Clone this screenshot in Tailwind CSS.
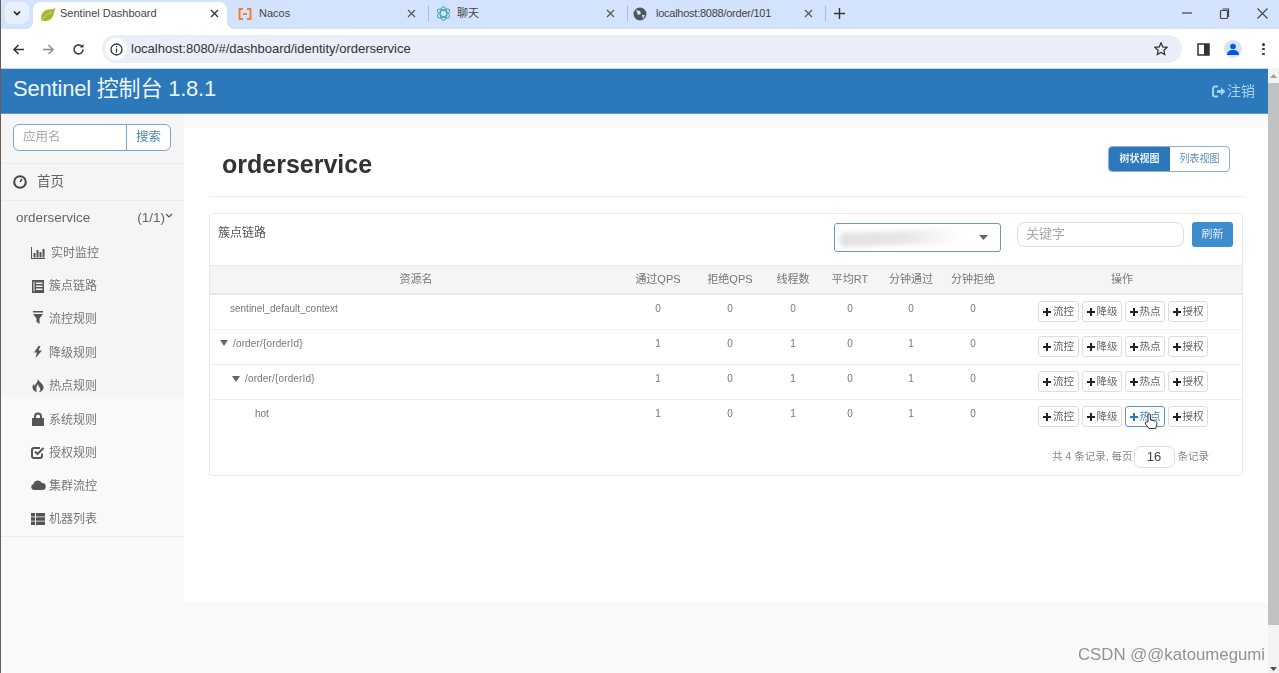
<!DOCTYPE html>
<html lang="en">
<head>
  <meta charset="UTF-8" />
  <title>Sentinel Dashboard</title>
  <script src="https://cdn.jsdelivr.net/npm/@tailwindcss/browser@4"></script>
</head>
<body class="h-[673px] w-[1279px] overflow-hidden bg-[#f9f9f9] font-['Liberation_Sans','Noto_Sans_CJK_SC',sans-serif] text-[#777]">
<div class="relative h-[673px] blur-[0.4px]">

  <!-- Tab strip -->
  <div class="flex h-[29px] items-end bg-[#d3e3fd] pl-[5px] text-[11px] text-[#444]">
    <div class="mb-[5px] flex h-[22px] w-[24px] items-center justify-center rounded-md bg-[#e8f0fe]">
      <svg class="h-[10px] w-[10px]" viewBox="0 0 10 10" fill="none" stroke="#222" stroke-width="1.6"><path d="M2 3.500l3 3 3-3"/></svg>
    </div>
    <div class="relative ml-[4px] flex h-[27px] w-[194px] items-center rounded-t-lg bg-white pb-[4px] pl-[7px]">
      <span class="absolute bottom-0 left-[-8px] h-[8px] w-[8px] bg-[radial-gradient(circle_at_0_0,#d3e3fd_8px,#fff_8.5px)]"></span>
      <span class="absolute bottom-0 right-[-8px] h-[8px] w-[8px] bg-[radial-gradient(circle_at_100%_0,#d3e3fd_8px,#fff_8.5px)]"></span>
      <svg class="h-[16px] w-[16px]" viewBox="0 0 16 16"><path d="M15.500 1C14 4.500 11 2.500 6.500 4 2 5.500.5 10 1.500 14.500c3 1 10.500 1 12-6 .6-3 2-5 2-7.500z" fill="#a5b832"/><path d="M2.500 14C5 9.500 8 7.500 12 6" fill="none" stroke="#d8dc7a" stroke-width=".8"/></svg>
      <span class="ml-[4px] w-[150px]">Sentinel Dashboard</span>
      <svg class="h-[9px] w-[9px]" viewBox="0 0 9 9" stroke="#333" stroke-width="1.4"><path d="M1 1l7 7M8 1L1 8"/></svg>
    </div>
    <div class="flex h-[27px] w-[201px] items-center pb-[4px] pl-[11px]">
      <svg class="h-[14px] w-[14px]" viewBox="0 0 14 14" fill="none" stroke="#ee7f33" stroke-width="2"><path d="M5 2H1.500v10H5M9 2h3.500v10H9M5 7h4"/></svg>
      <span class="ml-[7px] w-[148px]">Nacos</span>
      <svg class="h-[9px] w-[9px]" viewBox="0 0 9 9" stroke="#555" stroke-width="1.2"><path d="M1 1l7 7M8 1L1 8"/></svg>
    </div>
    <div class="mb-[8px] h-[16px] w-px bg-[#a8c0e0]"></div>
    <div class="flex h-[27px] w-[198px] items-center pb-[4px] pl-[7px]">
      <svg class="h-[15px] w-[15px]" viewBox="0 0 15 15" fill="none" stroke="#47a6b3" stroke-width="1.100"><ellipse cx="7.500" cy="7.500" rx="3.200" ry="6.800"/><ellipse cx="7.500" cy="7.500" rx="3.200" ry="6.800" transform="rotate(60 7.500 7.500)"/><ellipse cx="7.500" cy="7.500" rx="3.200" ry="6.800" transform="rotate(120 7.500 7.500)"/></svg>
      <span class="ml-[6px] w-[149px]">聊天</span>
      <svg class="h-[9px] w-[9px]" viewBox="0 0 9 9" stroke="#555" stroke-width="1.2"><path d="M1 1l7 7M8 1L1 8"/></svg>
    </div>
    <div class="mb-[8px] h-[16px] w-px bg-[#a8c0e0]"></div>
    <div class="flex h-[27px] w-[197px] items-center pb-[4px] pl-[5px]">
      <svg class="h-[14px] w-[14px]" viewBox="0 0 14 14"><circle cx="7" cy="7" r="6.500" fill="#50565e"/><path d="M3 3l4 1 1 3-3 1zM9 8l3 0-2 4z" fill="#d3e3fd"/></svg>
      <span class="ml-[9px] w-[148px] tracking-[-0.25px]">localhost:8088/order/101</span>
      <svg class="h-[9px] w-[9px]" viewBox="0 0 9 9" stroke="#555" stroke-width="1.2"><path d="M1 1l7 7M8 1L1 8"/></svg>
    </div>
    <div class="mb-[8px] h-[16px] w-px bg-[#a8c0e0]"></div>
    <div class="mb-[8px] ml-[8px] flex h-[16px] items-center">
      <svg class="h-[11px] w-[11px]" viewBox="0 0 11 11" stroke="#333" stroke-width="1.4"><path d="M5.500 0v11M0 5.500h11"/></svg>
    </div>
    <div class="mb-[8px] ml-auto flex h-[16px] w-[97px] items-center justify-between pr-[11px]">
      <svg class="h-[10px] w-[10px]" viewBox="0 0 10 10" stroke="#444" stroke-width="1.2"><path d="M0 5h10"/></svg>
      <svg class="h-[11px] w-[11px]" viewBox="0 0 11 11" fill="none" stroke="#444" stroke-width="1.2"><rect x="1.500" y="2.500" width="7" height="8" rx="1"/><path d="M3.500 1h6v8"/></svg>
      <svg class="h-[11px] w-[11px]" viewBox="0 0 11 11" stroke="#444" stroke-width="1.100"><path d="M.5.5l10 10M10.500.5l-10 10"/></svg>
    </div>
  </div>

  <!-- Toolbar -->
  <div class="flex h-[39px] items-center bg-white pt-[1px]">
    <div class="flex w-[102px] items-center pl-[12px]">
      <svg class="h-[13px] w-[13px]" viewBox="0 0 13 13" fill="none" stroke="#333" stroke-width="1.500"><path d="M12 6.500H2M6.500 2L2 6.500 6.500 11"/></svg>
      <svg class="ml-[17px] h-[13px] w-[13px]" viewBox="0 0 13 13" fill="none" stroke="#888" stroke-width="1.300"><path d="M1 6.500h10M6.500 2L11 6.500 6.500 11"/></svg>
      <svg class="ml-[17px] h-[13px] w-[13px]" viewBox="0 0 13 13" fill="none" stroke="#333" stroke-width="1.500"><path d="M11 6.500a4.500 4.500 0 1 1-1.500-3.400"/><path d="M11.500 1v3.500H8" fill="#333" stroke="none"/></svg>
    </div>
    <div class="flex h-[28px] w-[1080px] items-center rounded-full bg-[#e9eef8] text-[13px] text-[#333]">
      <div class="ml-[3px] flex h-[22px] w-[22px] items-center justify-center rounded-full bg-white">
        <svg class="h-[13px] w-[13px]" viewBox="0 0 13 13" fill="none" stroke="#333" stroke-width="1.300"><circle cx="6.500" cy="6.500" r="5.500"/><path d="M6.500 5.500v4M6.500 3v1.300"/></svg>
      </div>
      <span class="ml-[4px]">localhost:8080/#/dashboard/identity/orderservice</span>
      <svg class="ml-auto mr-[14px] h-[14px] w-[14px]" viewBox="0 0 14 14" fill="none" stroke="#333" stroke-width="1.300"><path d="M7 1l1.800 3.900 4.200.5-3.100 2.900.8 4.200L7 10.400l-3.700 2.100.8-4.200L1 5.400l4.200-.5z"/></svg>
    </div>
    <svg class="ml-[15px] h-[13px] w-[13px]" viewBox="0 0 13 13"><path d="M1 1h11v11H1z" fill="none" stroke="#333" stroke-width="1.500"/><path d="M7 1h5v11H7z" fill="#333"/></svg>
    <div class="ml-[14px] flex h-[18px] w-[18px] items-center justify-center rounded-full bg-[#d3e3fd]">
      <svg class="h-[12px] w-[12px]" viewBox="0 0 12 12" fill="#0b57d0"><circle cx="6" cy="3.500" r="2.800"/><path d="M0 12c0-3 2-5 6-5s6 2 6 5z"/></svg>
    </div>
    <div class="ml-[20px] flex h-[12px] w-[3px] flex-col justify-between">
      <div class="h-[2.500px] w-[2.500px] rounded-full bg-[#333]"></div>
      <div class="h-[2.500px] w-[2.500px] rounded-full bg-[#333]"></div>
      <div class="h-[2.500px] w-[2.500px] rounded-full bg-[#333]"></div>
    </div>
  </div>

  <!-- Page viewport with its scrollbar -->
  <div class="relative flex h-[605px]">
    <div class="w-[1268px] border-t border-[#c9d3de]">

      <!-- App header -->
      <header class="flex h-[45px] items-center justify-between border-b border-[#5c9bd1] bg-[#2b78bb] pl-[13px] pr-[13px] text-white">
        <span class="-mt-[4px] text-[22px] leading-none tracking-[-0.2px] text-[#eef4fa]">Sentinel 控制台 1.8.1</span>
        <span class="flex items-center gap-[1px] text-[14px] text-[#a8d4ec]">
          <svg class="h-[13px] w-[14px]" viewBox="0 0 14 13" fill="none" stroke="#a8d4ec" stroke-width="2"><path d="M6 1.500H3a2 2 0 0 0-2 2v6a2 2 0 0 0 2 2h3"/><path d="M5 6.500h5" stroke-width="3"/><path d="M9 2.500l4.500 4-4.500 4z" fill="#a8d4ec" stroke="none"/></svg>
          注销
        </span>
      </header>

      <div class="flex">
        <!-- Sidebar -->
        <aside class="h-[559px] w-[184px] bg-[linear-gradient(#f5f5f5_282px,#f9f9f9_282px)] text-[12px] text-[#777]">
          <div class="border-b border-[#ececec]">
            <div class="h-[50px] border-b border-[#ececec] pl-[13px] pt-[10px]">
              <div class="flex h-[27px] w-[158px] overflow-hidden rounded-[6px] border border-[#7fa5c9] bg-white text-[12.5px]">
                <span class="flex-1 pl-[9px] leading-[24px] text-[#aaa]">应用名</span>
                <span class="w-[44px] border-l border-[#7fa5c9] text-center leading-[25px] text-[#4a86b8]">搜索</span>
              </div>
            </div>
            <div class="flex h-[37px] items-center border-b border-[#ececec] pl-[13px] text-[13.5px] text-[#666]">
              <svg class="h-[14px] w-[14px]" viewBox="0 0 14 14" fill="none" stroke="#444" stroke-width="2"><circle cx="7" cy="7" r="5.800"/><path d="M7 7l2-3M4 6h.1M7 4h.1" stroke-width="1.500"/></svg>
              <span class="ml-[10px]">首页</span>
            </div>
            <div class="flex h-[34px] items-center pl-[16px] pr-[11px] text-[13.5px] text-[#666]">
              <span>orderservice</span>
              <span class="ml-auto">(1/1)</span>
              <svg class="mb-[4px] h-[6px] w-[8px]" viewBox="0 0 8 6" fill="none" stroke="#555" stroke-width="1.200"><path d="M1 1l3 3 3-3"/></svg>
            </div>
            <ul class="mt-[1px]">
              <li class="flex h-[33.4px] items-center pl-[31px]">
                <svg class="h-[12px] w-[14px]" viewBox="0 0 14 12" fill="#555"><path d="M0 0h1v11h13v1H0zM2.500 6h2v4.500h-2zM5.500 3h2v7.500h-2zM8.500 5h2v5.500h-2zM11.500 2h2v8.500h-2z"/></svg>
                <span class="ml-[6px]">实时监控</span>
              </li>
              <li class="flex h-[33.4px] items-center pl-[32px]">
                <svg class="h-[13px] w-[12px]" viewBox="0 0 12 13" fill="#555"><path d="M0 0h12v13H0zM1.500 1.500v10h1v-10zM4 2.500v1.500h6.500V2.500zM4 5.500V7h6.500V5.500zM4 8.500V10h6.500V8.500z" fill-rule="evenodd"/></svg>
                <span class="ml-[5px]">簇点链路</span>
              </li>
              <li class="flex h-[33.4px] items-center pl-[33px]">
                <svg class="mb-[3px] h-[13px] w-[10px]" viewBox="0 0 10 13" fill="#555"><path d="M0 0h10v1.500H0zM0 3h10L6.500 7.500V13l-3-2V7.500z"/></svg>
                <span class="ml-[6px]">流控规则</span>
              </li>
              <li class="flex h-[33.4px] items-center pl-[34px]">
                <svg class="mb-[2px] h-[12px] w-[8px]" viewBox="0 0 8 12" fill="#555"><path d="M4.500 0L0 6.500h3L1.500 12 8 4.500H4.500L6.500 0z"/></svg>
                <span class="ml-[7px]">降级规则</span>
              </li>
              <li class="flex h-[33.4px] items-center pl-[32px]">
                <svg class="mb-[2px] h-[13px] w-[12px]" viewBox="0 0 12 13" fill="#555"><path d="M6 0c1 3 5 4.500 5.500 8 .3 3-2.500 5-4.500 5 1.500-1 2-3 .3-5C6.500 7 6 6 6.500 5 5 6 3.500 8.500 5 13 2 12.500.3 10.500.5 8c.1-1.500 1-2.500 1.500-3 0 1 .5 1.500 1 1.500C3.500 4.500 6 3 6 0z"/></svg>
                <span class="ml-[5px]">热点规则</span>
              </li>
              <li class="flex h-[33.4px] items-center pl-[31px]">
                <svg class="mb-[1px] h-[14px] w-[14px]" viewBox="0 0 14 14" fill="#555"><path d="M3 6V4.500a4 4 0 0 1 8 0V6h2v8H1V6zM5 6h4V4.500a2 2 0 0 0-4 0z" fill-rule="evenodd"/></svg>
                <span class="ml-[4px]">系统规则</span>
              </li>
              <li class="flex h-[33.4px] items-center pl-[31px]">
                <svg class="mb-[1px] h-[13px] w-[14px]" viewBox="0 0 14 13" fill="none" stroke="#555" stroke-width="2"><path d="M11 7.500V10a2 2 0 0 1-2 2H3a2 2 0 0 1-2-2V4a2 2 0 0 1 2-2h6"/><path d="M4 5.500l2.500 2.500L12.500 2"/></svg>
                <span class="ml-[4px]">授权规则</span>
              </li>
              <li class="flex h-[33.4px] items-center pl-[31px]">
                <svg class="mb-[3px] h-[10px] w-[15px]" viewBox="0 0 15 10" fill="#555"><path d="M3 10a3 3 0 0 1-.5-5.900A4.500 4.500 0 0 1 11 3a3.500 3.500 0 0 1 .5 7z"/></svg>
                <span class="ml-[3px]">集群流控</span>
              </li>
              <li class="flex h-[32.4px] items-center pl-[31px]">
                <svg class="mb-[1px] h-[12px] w-[14px]" viewBox="0 0 14 12" fill="#555"><path d="M0 0h4v3.500H0zM5 0h9v3.500H5zM0 4.300h4v3.500H0zM5 4.300h9v3.500H5zM0 8.500h4V12H0zM5 8.500h9V12H5z"/></svg>
                <span class="ml-[4px]">机器列表</span>
              </li>
            </ul>
          </div>
        </aside>

        <!-- Main -->
        <main class="flex-1 pt-[14px]">
          <div class="h-[474px] bg-white pl-[25px] pr-[24px]">
            <div class="flex h-[69px] items-start justify-between border-b border-[#eeeeee]">
              <h1 class="ml-[13px] mt-[21px] text-[25px] font-bold leading-[30px] text-[#333]">orderservice</h1>
              <div class="mr-[14px] mt-[18px] flex h-[26px] overflow-hidden rounded-[4px] border border-[#8fb2d0] text-[10px] leading-[24px]">
                <span class="w-[61px] bg-[#2b78bb] text-center font-bold text-[#e8f0f8]">树状视图</span>
                <span class="w-[59px] text-center text-[#5a8fbc]">列表视图</span>
              </div>
            </div>

            <div class="mt-[16px] h-[263px] w-[1034px] rounded-[4px] border border-[#e7e7e7] text-[10px]">
              <div class="flex h-[51px] items-start">
                <span class="ml-[8px] mt-[10px] shrink-0 whitespace-nowrap text-[12px] text-[#555]">簇点链路</span>
                <div class="ml-auto mt-[9px] flex h-[29px] w-[167px] items-center rounded-[3px] border border-[#6e97bd]">
                  <div class="ml-[5px] h-[14px] w-[122px] -rotate-[2deg] rounded-sm bg-linear-to-r from-[#e2e2e2] via-[#e6e6e6] to-white blur-[2px]"></div>
                  <svg class="ml-auto mr-[12px] h-[5px] w-[9px]" viewBox="0 0 9 5" fill="#666"><path d="M0 0h9L4.500 5z"/></svg>
                </div>
                <div class="ml-[16px] mt-[8px] h-[25px] w-[167px] rounded-[8px] border border-[#dddddd] pl-[8px] text-[13px] leading-[22px] text-[#aaa]">关键字</div>
                <div class="ml-[8px] mr-[9px] mt-[8px] h-[25px] w-[41px] rounded-[3px] bg-[#3f8dcf] text-center text-[11px] leading-[25px] text-[#dcebf7]">刷新</div>
              </div>

              <div class="grid h-[30px] grid-cols-[410px_76px_68px_58px_56px_66px_58px_1fr] items-center border-t border-b-2 border-[#e8e8e8] bg-[#f4f5f7] text-center text-[11px] text-[#777]">
                <span class="pl-[2px]">资源名</span><span>通过QPS</span><span>拒绝QPS</span><span>线程数</span><span>平均RT</span><span>分钟通过</span><span>分钟拒绝</span><span>操作</span>
              </div>

              <!-- row -->
              <div class="grid h-[35px] grid-cols-[410px_76px_68px_58px_56px_66px_58px_1fr] border-b border-[#eeeeee] text-center">
                <span class="pl-[20px] pt-[6px] text-left">sentinel_default_context</span>
                <span class="pt-[6px]">0</span><span class="pt-[6px]">0</span><span class="pt-[6px]">0</span><span class="pt-[6px]">0</span><span class="pt-[6px]">0</span><span class="pt-[6px]">0</span>
                <div class="flex gap-[3px] pl-[36px] pt-[6px] text-[10.5px]">
                  <span class="flex h-[21px] w-[41px] items-center justify-center gap-[2px] rounded-[3px] border border-[#dddddd] text-[#666]"><svg class="h-[8px] w-[8px]" viewBox="0 0 8 8" fill="#222"><path d="M3 0h2v3h3v2H5v3H3V5H0V3h3z"/></svg>流控</span>
                  <span class="flex h-[21px] w-[40px] items-center justify-center gap-[2px] rounded-[3px] border border-[#dddddd] text-[#666]"><svg class="h-[8px] w-[8px]" viewBox="0 0 8 8" fill="#222"><path d="M3 0h2v3h3v2H5v3H3V5H0V3h3z"/></svg>降级</span>
                  <span class="flex h-[21px] w-[40px] items-center justify-center gap-[2px] rounded-[3px] border border-[#dddddd] text-[#666]"><svg class="h-[8px] w-[8px]" viewBox="0 0 8 8" fill="#222"><path d="M3 0h2v3h3v2H5v3H3V5H0V3h3z"/></svg>热点</span>
                  <span class="flex h-[21px] w-[40px] items-center justify-center gap-[2px] rounded-[3px] border border-[#dddddd] text-[#666]"><svg class="h-[8px] w-[8px]" viewBox="0 0 8 8" fill="#222"><path d="M3 0h2v3h3v2H5v3H3V5H0V3h3z"/></svg>授权</span>
                </div>
              </div>

              <div class="grid h-[35px] grid-cols-[410px_76px_68px_58px_56px_66px_58px_1fr] border-b border-[#eeeeee] text-center">
                <span class="flex items-start pl-[10px] pt-[6px] text-left tracking-[0.15px]"><svg class="mr-[5px] mt-[4px] h-[6px] w-[8px]" viewBox="0 0 8 6" fill="#666"><path d="M0 0h8L4 6z"/></svg>/order/{orderId}</span>
                <span class="pt-[6px]">1</span><span class="pt-[6px]">0</span><span class="pt-[6px]">1</span><span class="pt-[6px]">0</span><span class="pt-[6px]">1</span><span class="pt-[6px]">0</span>
                <div class="flex gap-[3px] pl-[36px] pt-[6px] text-[10.5px]">
                  <span class="flex h-[21px] w-[41px] items-center justify-center gap-[2px] rounded-[3px] border border-[#dddddd] text-[#666]"><svg class="h-[8px] w-[8px]" viewBox="0 0 8 8" fill="#222"><path d="M3 0h2v3h3v2H5v3H3V5H0V3h3z"/></svg>流控</span>
                  <span class="flex h-[21px] w-[40px] items-center justify-center gap-[2px] rounded-[3px] border border-[#dddddd] text-[#666]"><svg class="h-[8px] w-[8px]" viewBox="0 0 8 8" fill="#222"><path d="M3 0h2v3h3v2H5v3H3V5H0V3h3z"/></svg>降级</span>
                  <span class="flex h-[21px] w-[40px] items-center justify-center gap-[2px] rounded-[3px] border border-[#dddddd] text-[#666]"><svg class="h-[8px] w-[8px]" viewBox="0 0 8 8" fill="#222"><path d="M3 0h2v3h3v2H5v3H3V5H0V3h3z"/></svg>热点</span>
                  <span class="flex h-[21px] w-[40px] items-center justify-center gap-[2px] rounded-[3px] border border-[#dddddd] text-[#666]"><svg class="h-[8px] w-[8px]" viewBox="0 0 8 8" fill="#222"><path d="M3 0h2v3h3v2H5v3H3V5H0V3h3z"/></svg>授权</span>
                </div>
              </div>

              <div class="grid h-[35px] grid-cols-[410px_76px_68px_58px_56px_66px_58px_1fr] border-b border-[#eeeeee] text-center">
                <span class="flex items-start pl-[22px] pt-[6px] text-left tracking-[0.15px]"><svg class="mr-[5px] mt-[5px] h-[6px] w-[8px]" viewBox="0 0 8 6" fill="#666"><path d="M0 0h8L4 6z"/></svg>/order/{orderId}</span>
                <span class="pt-[6px]">1</span><span class="pt-[6px]">0</span><span class="pt-[6px]">1</span><span class="pt-[6px]">0</span><span class="pt-[6px]">1</span><span class="pt-[6px]">0</span>
                <div class="flex gap-[3px] pl-[36px] pt-[6px] text-[10.5px]">
                  <span class="flex h-[21px] w-[41px] items-center justify-center gap-[2px] rounded-[3px] border border-[#dddddd] text-[#666]"><svg class="h-[8px] w-[8px]" viewBox="0 0 8 8" fill="#222"><path d="M3 0h2v3h3v2H5v3H3V5H0V3h3z"/></svg>流控</span>
                  <span class="flex h-[21px] w-[40px] items-center justify-center gap-[2px] rounded-[3px] border border-[#dddddd] text-[#666]"><svg class="h-[8px] w-[8px]" viewBox="0 0 8 8" fill="#222"><path d="M3 0h2v3h3v2H5v3H3V5H0V3h3z"/></svg>降级</span>
                  <span class="flex h-[21px] w-[40px] items-center justify-center gap-[2px] rounded-[3px] border border-[#dddddd] text-[#666]"><svg class="h-[8px] w-[8px]" viewBox="0 0 8 8" fill="#222"><path d="M3 0h2v3h3v2H5v3H3V5H0V3h3z"/></svg>热点</span>
                  <span class="flex h-[21px] w-[40px] items-center justify-center gap-[2px] rounded-[3px] border border-[#dddddd] text-[#666]"><svg class="h-[8px] w-[8px]" viewBox="0 0 8 8" fill="#222"><path d="M3 0h2v3h3v2H5v3H3V5H0V3h3z"/></svg>授权</span>
                </div>
              </div>

              <div class="grid h-[35px] grid-cols-[410px_76px_68px_58px_56px_66px_58px_1fr] text-center">
                <span class="pl-[45px] pt-[6px] text-left">hot</span>
                <span class="pt-[6px]">1</span><span class="pt-[6px]">0</span><span class="pt-[6px]">1</span><span class="pt-[6px]">0</span><span class="pt-[6px]">1</span><span class="pt-[6px]">0</span>
                <div class="flex gap-[3px] pl-[36px] pt-[6px] text-[10.5px]">
                  <span class="flex h-[21px] w-[41px] items-center justify-center gap-[2px] rounded-[3px] border border-[#dddddd] text-[#666]"><svg class="h-[8px] w-[8px]" viewBox="0 0 8 8" fill="#222"><path d="M3 0h2v3h3v2H5v3H3V5H0V3h3z"/></svg>流控</span>
                  <span class="flex h-[21px] w-[40px] items-center justify-center gap-[2px] rounded-[3px] border border-[#dddddd] text-[#666]"><svg class="h-[8px] w-[8px]" viewBox="0 0 8 8" fill="#222"><path d="M3 0h2v3h3v2H5v3H3V5H0V3h3z"/></svg>降级</span>
                  <span class="relative flex h-[21px] w-[40px] items-center justify-center gap-[2px] rounded-[3px] border border-[#5f93c2] text-[#4a86b8]"><svg class="h-[8px] w-[8px]" viewBox="0 0 8 8" fill="#2b78bb"><path d="M3 0h2v3h3v2H5v3H3V5H0V3h3z"/></svg>热点
                    <svg class="absolute left-[18px] top-[6px] h-[17px] w-[14px]" viewBox="0 0 14 17" fill="#fff" stroke="#333" stroke-width="1"><path d="M4 9V2a1.200 1.200 0 0 1 2.400 0v5l4.500 1c1.300.3 2 1 2 2.500 0 2-.5 3.500-1.200 5H5L1.500 11c-1-1.500.8-2.600 2.500-2z"/></svg>
                  </span>
                  <span class="flex h-[21px] w-[40px] items-center justify-center gap-[2px] rounded-[3px] border border-[#dddddd] text-[#666]"><svg class="h-[8px] w-[8px]" viewBox="0 0 8 8" fill="#222"><path d="M3 0h2v3h3v2H5v3H3V5H0V3h3z"/></svg>授权</span>
                </div>
              </div>

              <div class="flex items-center justify-end pr-[33px] pt-[11px] text-[10.5px] text-[#888]">
                <span>共 4 条记录, 每页</span>
                <span class="ml-[1px] mr-[3px] h-[22px] w-[41px] rounded-[7px] border border-[#dddddd] text-center text-[13px] leading-[20px] text-[#444]">16</span>
                <span>条记录</span>
              </div>
            </div>
          </div>
        </main>
      </div>
    </div>

    <!-- Scrollbar -->
    <div class="flex w-[11px] flex-col items-center bg-[#f3f3f3] pb-[2px] pt-[6px]">
      <svg class="h-[4px] w-[7px]" viewBox="0 0 7 4" fill="#a0a0a0"><path d="M3.500 0L7 4H0z"/></svg>
      <div class="mt-[5px] h-[542px] w-full bg-[#c1c1c1]"></div>
      <svg class="mt-auto h-[4px] w-[7px]" viewBox="0 0 7 4" fill="#505050"><path d="M0 0h7L3.500 4z"/></svg>
    </div>

    <div class="absolute left-[1078px] top-[574px] text-[16.8px] text-[#939393]">CSDN @@katoumegumi</div>
  </div>

  <!-- Sliver of the desktop behind the window -->
  <div class="absolute left-0 top-0 h-full w-px bg-[#6b5b55]"></div>
</div>
</body>
</html>
